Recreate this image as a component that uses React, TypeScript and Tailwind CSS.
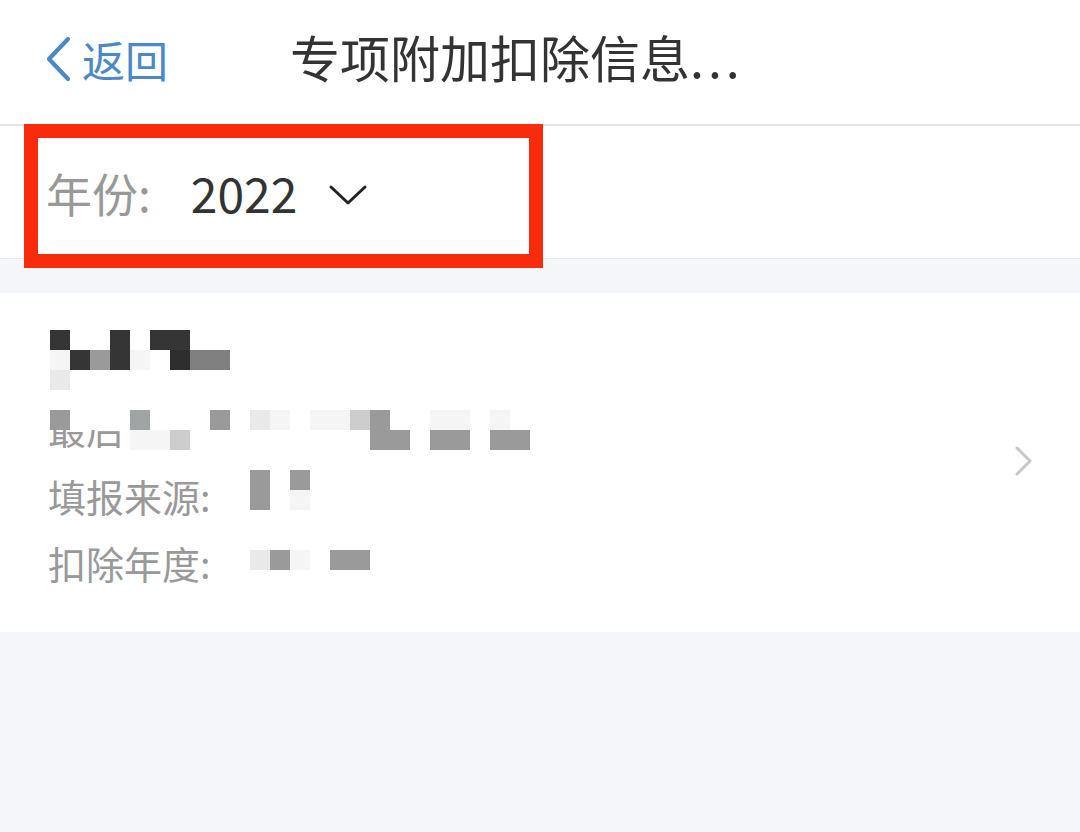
import React from "react";

const CELL: Record<string, string> = {
  D: "bg-[#353535]",
  K: "bg-[#2e2e2e]",
  M: "bg-[#808080]",
  G: "bg-[#9a9a9a]",
  A: "bg-[#a0a4a4]",
  L: "bg-[#cccccc]",
  l: "bg-[#e9e9e9]",
  f: "bg-[#f5f5f5]",
  W: "bg-white",
  ".": "",
};

function Mosaic({ rows }: { rows: string[] }) {
  return (
    <div className="flex flex-col">
      {rows.map((r, i) => (
        <div key={i} className="flex h-[20px]">
          {r.split("").map((c, j) => (
            <div key={j} className={`w-[20px] h-[20px] ${CELL[c] ?? ""}`} />
          ))}
        </div>
      ))}
    </div>
  );
}

const font = { fontFamily: '"Noto Sans CJK SC", "Noto Sans", sans-serif' };

export default function App() {
  return (
    <div className="relative w-[1080px] h-[832px] bg-[#f5f6f9] overflow-hidden" style={font}>
      {/* Header */}
      <div className="h-[126px] bg-white border-b-2 border-[#e4e4e4] flex items-center pb-[6px]">
        <div className="flex items-center pl-[44px] w-[290px]">
          <svg width="28" height="46" viewBox="0 0 28 46" className="mr-[10px]">
            <path d="M24 3 L5 23 L24 43" fill="none" stroke="#4a88c8" strokeWidth="4.2" strokeLinecap="round" strokeLinejoin="round" />
          </svg>
          <span className="text-[43px] leading-none text-[#4a88c8]">返回</span>
        </div>
        <div className="text-[50px] leading-none text-[#333333] mb-[6px]">
          专项附加扣除信息<span className="tracking-[4px]">...</span>
        </div>
      </div>

      {/* Filter row */}
      <div className="h-[132px] bg-white flex items-center pl-[46px]">
        <span className="text-[46px] leading-none text-[#999999]">年份:</span>
        <span className="text-[48px] leading-none text-[#333333] ml-[40px]">2022</span>
        <svg width="40" height="24" viewBox="0 0 40 24" className="ml-[31px] mt-[6px]">
          <path d="M3 4 L20 20 L37 4" fill="none" stroke="#222222" strokeWidth="3" strokeLinecap="round" strokeLinejoin="round" />
        </svg>
      </div>
      <div className="h-[35px] border-t border-[#ebebef] bg-[#f5f6f9]" />

      {/* Card */}
      <div className="h-[339px] bg-white flex items-center">
        <div className="flex-1 h-full flex flex-col pl-[48px] pt-[37px]">
          <div className="ml-[2px]">
            <Mosaic rows={["D..D.DD..", "fDGDf.KMM", "l........"]} />
          </div>
          <div className="relative h-[68px] mt-[4px] flex items-center">
            <span className="text-[38px] leading-none text-[#999999]">最后</span>
            <div className="absolute left-[2px] top-[16px]">
              <Mosaic rows={["GWWWAWWWG.lf.ffLG..ff.f.", "....ffL.........GG.GG.GG"]} />
            </div>
          </div>
          <div className="relative h-[67px] flex items-center">
            <span className="text-[38px] leading-none text-[#999999]">填报来源:</span>
            <div className="absolute left-[202px] top-[8px]">
              <Mosaic rows={["G.G", "G.f"]} />
            </div>
          </div>
          <div className="relative h-[68px] flex items-center">
            <span className="text-[38px] leading-none text-[#999999]">扣除年度:</span>
            <div className="absolute left-[202px] top-[21px]">
              <Mosaic rows={["lGf.GG"]} />
            </div>
          </div>
        </div>
        <svg width="20" height="32" viewBox="0 0 20 32" className="mr-[46px] mb-[4px]">
          <path d="M3 3 L16 16 L3 29" fill="none" stroke="#c8c8c8" strokeWidth="3" strokeLinecap="round" strokeLinejoin="round" />
        </svg>
      </div>

      {/* Red annotation box */}
      <div className="absolute left-[24px] top-[124px] w-[519px] h-[144px] border-[14px] border-[#fa2a0c]" />
    </div>
  );
}
